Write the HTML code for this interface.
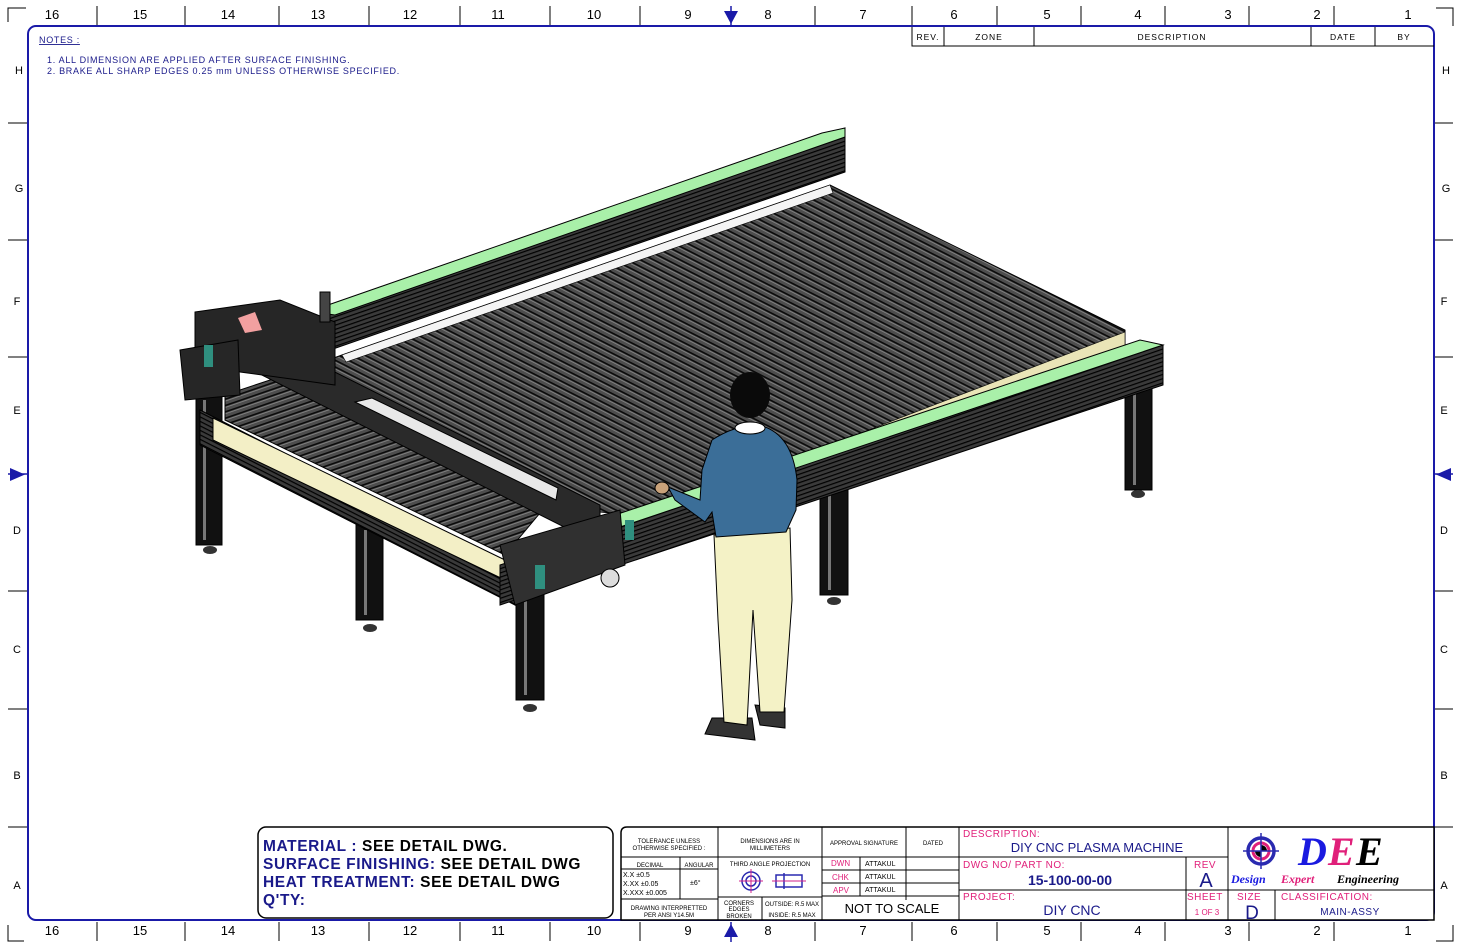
<!DOCTYPE html>
<html><head><meta charset="utf-8"><style>
html,body{margin:0;padding:0;background:#fff;}
svg{display:block;font-family:"Liberation Sans",sans-serif;}
</style></head><body>
<svg width="1461" height="949" viewBox="0 0 1461 949" xmlns="http://www.w3.org/2000/svg">
<defs>
<pattern id="sl" width="6" height="6" patternUnits="userSpaceOnUse" patternTransform="rotate(27)">
<rect width="6" height="6" fill="#4d4d4d"/><rect y="0" width="6" height="1.6" fill="#0a0a0a"/><rect y="2.2" width="6" height="0.8" fill="#8a8a8a"/>
</pattern>
<pattern id="sl2" width="6" height="6" patternUnits="userSpaceOnUse" patternTransform="rotate(-19)">
<rect width="6" height="6" fill="#4d4d4d"/><rect y="0" width="6" height="1.6" fill="#0a0a0a"/><rect y="2.2" width="6" height="0.8" fill="#8a8a8a"/>
</pattern>
<pattern id="rl" width="4" height="4" patternUnits="userSpaceOnUse" patternTransform="rotate(-19)">
<rect width="4" height="4" fill="#3a3a3a"/><rect width="4" height="1.2" fill="#000"/>
</pattern>
<pattern id="rl2" width="4" height="4" patternUnits="userSpaceOnUse" patternTransform="rotate(27)">
<rect width="4" height="4" fill="#3a3a3a"/><rect width="4" height="1.2" fill="#000"/>
</pattern>
</defs>
<rect width="1461" height="949" fill="#fff"/>
<path d="M8,22 V8 H26 M1436,8 H1453 V26 M8,925 V941 H24 M1453,925 V941 H1436" stroke="#000" fill="none" stroke-width="1"/>
<g stroke="#000" stroke-width="1">
<path d="M97,6V26M185,6V26M279,6V26M369,6V26M460,6V26M550,6V26M640,6V26M815,6V26M912,6V26M997,6V26M1081,6V26M1165,6V26M1249,6V26M1334,6V26"/>
<path d="M97,922V941M185,922V941M279,922V941M369,922V941M460,922V941M550,922V941M640,922V941M815,922V941M912,922V941M997,922V941M1081,922V941M1165,922V941M1249,922V941M1334,922V941"/>
<path d="M8,123H28M8,240H28M8,357H28M8,591H28M8,709H28M8,827H28M1434,123H1453M1434,240H1453M1434,357H1453M1434,591H1453M1434,709H1453M1434,827H1453"/>
</g>
<g font-size="13" fill="#000" text-anchor="middle">
<text x="52" y="19">16</text><text x="140" y="19">15</text><text x="228" y="19">14</text><text x="318" y="19">13</text><text x="410" y="19">12</text><text x="498" y="19">11</text><text x="594" y="19">10</text><text x="688" y="19">9</text><text x="768" y="19">8</text><text x="863" y="19">7</text><text x="954" y="19">6</text><text x="1047" y="19">5</text><text x="1138" y="19">4</text><text x="1228" y="19">3</text><text x="1317" y="19">2</text><text x="1408" y="19">1</text>
<text x="52" y="935">16</text><text x="140" y="935">15</text><text x="228" y="935">14</text><text x="318" y="935">13</text><text x="410" y="935">12</text><text x="498" y="935">11</text><text x="594" y="935">10</text><text x="688" y="935">9</text><text x="768" y="935">8</text><text x="863" y="935">7</text><text x="954" y="935">6</text><text x="1047" y="935">5</text><text x="1138" y="935">4</text><text x="1228" y="935">3</text><text x="1317" y="935">2</text><text x="1408" y="935">1</text>
</g>
<g font-size="11" fill="#000" text-anchor="middle">
<text x="19" y="74">H</text><text x="19" y="192">G</text><text x="17" y="305">F</text><text x="17" y="414">E</text><text x="17" y="534">D</text><text x="17" y="653">C</text><text x="17" y="779">B</text><text x="17" y="889">A</text>
<text x="1446" y="74">H</text><text x="1446" y="192">G</text><text x="1444" y="305">F</text><text x="1444" y="414">E</text><text x="1444" y="534">D</text><text x="1444" y="653">C</text><text x="1444" y="779">B</text><text x="1444" y="889">A</text>
</g>
<g fill="#1a1aa8">
<path d="M724,11H738L731,24Z"/><path d="M724,937H738L731,924Z"/>
<path d="M10,468V481L25,474.5Z"/><path d="M1451,468V481L1436,474.5Z"/>
</g>
<path d="M731,6V26M731,922V942M8,474H28M1434,474H1453" stroke="#1a1aa8" stroke-width="1.5"/>
<rect x="28" y="26" width="1406" height="894" rx="8" fill="none" stroke="#1a1aa8" stroke-width="2"/>
<g font-size="9" fill="#1a1a8a" letter-spacing="0.7">
<text x="39" y="43" text-decoration="underline">NOTES :</text>
<text x="47" y="63">1.  ALL DIMENSION ARE APPLIED AFTER SURFACE FINISHING.</text>
<text x="47" y="74">2.  BRAKE ALL SHARP EDGES  0.25 mm UNLESS OTHERWISE SPECIFIED.</text>
</g>
<g stroke="#000" stroke-width="1" fill="none">
<path d="M912,27V46H1434M944,27V46M1034,27V46M1311,27V46M1375,27V46"/>
</g>
<g font-size="8.5" fill="#000" text-anchor="middle" letter-spacing="1">
<text x="928" y="40">REV.</text><text x="989" y="40">ZONE</text><text x="1172" y="40">DESCRIPTION</text><text x="1343" y="40">DATE</text><text x="1404" y="40">BY</text>
</g>

<!-- ===== MACHINE ===== -->
<g fill="#111" stroke="#000">
<rect x="196" y="395" width="26" height="150"/><rect x="356" y="525" width="27" height="95"/>
<rect x="516" y="590" width="28" height="110"/><rect x="820" y="490" width="28" height="105"/>
<rect x="1125" y="385" width="27" height="105"/>
</g>
<g fill="#777"><rect x="203" y="400" width="3" height="140"/><rect x="364" y="530" width="3" height="85"/><rect x="524" y="595" width="3" height="100"/><rect x="828" y="495" width="3" height="95"/><rect x="1133" y="390" width="3" height="95"/></g>
<g fill="#333"><ellipse cx="210" cy="550" rx="7" ry="4"/><ellipse cx="370" cy="628" rx="7" ry="4"/><ellipse cx="530" cy="708" rx="7" ry="4"/><ellipse cx="834" cy="601" rx="7" ry="4"/><ellipse cx="1138" cy="494" rx="7" ry="4"/></g>
<!-- back rail -->
<polygon points="330,305 845,128 845,172 330,350" fill="url(#rl)" stroke="#000"/>
<polygon points="328,305 822,133 845,128 845,137 335,315 328,314" fill="#a9f0a9" stroke="#000"/>
<!-- left frame beam -->
<polygon points="200,410 515,570 515,605 200,445" fill="url(#rl2)" stroke="#000"/>
<polygon points="213,418 505,560 505,580 213,440" fill="#f3efc6" stroke="#000"/>
<!-- slat bed -->
<polygon points="342,355 830,185 1125,330 1125,345 640,515 600,512 230,400 240,392" fill="url(#sl)" stroke="#000"/>
<polygon points="342,355 830,185 833,193 346,362" fill="#f4f4f4" stroke="#000" stroke-width="0.6"/>
<polygon points="225,395 300,370 555,495 505,555 225,420" fill="url(#sl2)" stroke="#000"/>
<polygon points="790,460 1125,332 1125,347 792,475" fill="#e9e4b7" stroke="#000" stroke-width="0.6"/>
<!-- front rail -->
<polygon points="500,565 1163,345 1163,385 500,605" fill="url(#rl)" stroke="#000"/>
<polygon points="600,520 1140,340 1163,345 620,527" fill="#a9f0a9" stroke="#000"/>
<!-- gantry -->
<polygon points="232,340 255,332 600,505 600,528 580,535 232,360" fill="#2a2a2a" stroke="#000"/>
<polygon points="355,402 372,398 558,488 556,500" fill="#e8e8e8" stroke="#000"/>
<polygon points="195,312 280,300 335,322 335,385 240,372 195,355" fill="#262626" stroke="#000"/>
<polygon points="238,318 255,312 262,330 245,333" fill="#f2a0a0"/>
<rect x="320" y="292" width="10" height="30" fill="#444" stroke="#000"/>
<polygon points="180,350 238,340 240,395 185,400" fill="#262626" stroke="#000"/>
<rect x="204" y="345" width="9" height="22" fill="#2f8f7f"/>
<polygon points="500,545 620,510 625,565 515,605" fill="#303030" stroke="#000"/>
<rect x="535" y="565" width="10" height="24" fill="#2f8f7f"/><rect x="625" y="520" width="9" height="20" fill="#2f8f7f"/>
<circle cx="610" cy="578" r="9" fill="#ddd" stroke="#000"/>
<!-- person -->
<polygon points="712,718 752,718 755,740 705,734" fill="#333" stroke="#000"/>
<polygon points="755,705 785,708 785,728 760,725" fill="#333" stroke="#000"/>
<path d="M714,535 L790,528 L792,600 L784,712 L760,712 L753,610 L747,725 L724,722 L718,620 Z" fill="#f4f2c6" stroke="#000"/>
<path d="M712,440 Q735,425 758,425 Q792,432 797,480 L796,510 L786,532 L716,537 L712,512 L705,522 L675,500 L668,487 L700,500 L702,470 Z" fill="#3b6e98" stroke="#000"/>
<ellipse cx="750" cy="428" rx="15" ry="6" fill="#fff" stroke="#000"/>
<ellipse cx="750" cy="395" rx="20" ry="23" fill="#0a0a0a"/>
<ellipse cx="662" cy="488" rx="7" ry="6" fill="#c9a27a" stroke="#000"/>

<!-- ===== TITLE BLOCK ===== -->
<rect x="258" y="827" width="355" height="91" rx="8" fill="#fff" stroke="#000" stroke-width="1.5"/>
<g font-size="15.5" font-weight="bold" letter-spacing="0.6">
<text x="263" y="851"><tspan fill="#1a1a8a">MATERIAL : </tspan><tspan fill="#000">SEE DETAIL DWG.</tspan></text>
<text x="263" y="869"><tspan fill="#1a1a8a">SURFACE FINISHING: </tspan><tspan fill="#000">SEE DETAIL DWG</tspan></text>
<text x="263" y="887"><tspan fill="#1a1a8a">HEAT TREATMENT: </tspan><tspan fill="#000">SEE DETAIL DWG</tspan></text>
<text x="263" y="905" fill="#1a1a8a">Q'TY:</text>
</g>
<path d="M627,827 H1434 V920 H621 V833 Q621,827 627,827 Z" fill="#fff" stroke="#000" stroke-width="1.5"/>
<g stroke="#000" stroke-width="1" fill="none">
<path d="M718,827V920M822,827V920M906,827V900M959,827V920M1228,827V920"/>
<path d="M621,857H959M621,869H718M680,857V899M621,899H718M718,897H822M762,897V920"/>
<path d="M822,870H959M822,883H959M822,896H959M860,857V896"/>
<path d="M959,857H1228M959,890H1434M1186,857V920M1275,890V920"/>
</g>
<g font-size="6" fill="#000" text-anchor="middle">
<text x="669" y="843">TOLERANCE UNLESS</text><text x="669" y="850">OTHERWISE SPECIFIED :</text>
<text x="650" y="867">DECIMAL</text><text x="699" y="867">ANGULAR</text>
<text x="770" y="843">DIMENSIONS ARE IN</text><text x="770" y="850">MILLIMETERS</text>
<text x="770" y="866">THIRD ANGLE PROJECTION</text>
<text x="864" y="845">APPROVAL SIGNATURE</text><text x="933" y="845">DATED</text>
<text x="669" y="910">DRAWING INTERPRETTED</text><text x="669" y="917">PER ANSI Y14.5M</text>
<text x="739" y="905">CORNERS</text><text x="739" y="911">EDGES</text><text x="739" y="918">BROKEN</text>
<text x="792" y="906">OUTSIDE: R.5 MAX</text><text x="792" y="917">INSIDE: R.5 MAX</text>
</g>
<g font-size="7" fill="#000">
<text x="623" y="877">X.X    ±0.5</text><text x="623" y="886">X.XX   ±0.05</text><text x="623" y="895">X.XXX ±0.005</text>
<text x="690" y="885">±6°</text>
<text x="865" y="866">ATTAKUL</text><text x="865" y="879">ATTAKUL</text><text x="865" y="892">ATTAKUL</text>
</g>
<g font-size="8" fill="#e0207a"><text x="831" y="866">DWN</text><text x="832" y="880">CHK</text><text x="833" y="893">APV</text></g>
<g stroke="#2a2ab0" stroke-width="1.5" fill="none"><circle cx="751" cy="881" r="9"/><circle cx="751" cy="881" r="5"/><path d="M776,875 H802 L802,887 H776 Z M784,873 V889"/></g>
<path d="M739,881H763M751,869V893M772,881H806" stroke="#d0208a" stroke-width="1"/>
<text x="892" y="913" font-size="13" text-anchor="middle" fill="#000">NOT TO SCALE</text>
<g font-size="10" fill="#e0207a" letter-spacing="0.5">
<text x="963" y="837">DESCRIPTION:</text><text x="963" y="868">DWG NO/ PART NO:</text><text x="963" y="900">PROJECT:</text>
<text x="1194" y="868">REV</text><text x="1187" y="900">SHEET</text><text x="1237" y="900">SIZE</text><text x="1281" y="900">CLASSIFICATION:</text>
</g>
<g fill="#1a1a8a" text-anchor="middle">
<text x="1097" y="852" font-size="13">DIY CNC  PLASMA MACHINE</text>
<text x="1070" y="885" font-size="14" font-weight="bold">15-100-00-00</text>
<text x="1072" y="915" font-size="14">DIY CNC</text>
<text x="1206" y="887" font-size="20">A</text>
<text x="1252" y="919" font-size="19">D</text>
<text x="1207" y="915" font-size="8" fill="#e0207a">1 OF 3</text>
<text x="1350" y="915" font-size="10" letter-spacing="0.5">MAIN-ASSY</text>
</g>
<circle cx="1261" cy="851" r="13" fill="none" stroke="#2a2ab0" stroke-width="3.5"/>
<circle cx="1261" cy="851" r="8" fill="#fff" stroke="#e0207a" stroke-width="3"/>
<path d="M1261,851 L1261,845 A6,6 0 0 1 1267,851 Z M1261,851 L1261,857 A6,6 0 0 1 1255,851 Z" fill="#000"/>
<path d="M1243,851H1279M1261,833V869" stroke="#2a2ab0" stroke-width="1.5"/>
<g font-family="'Liberation Serif',serif" font-weight="bold" font-style="italic" font-size="40">
<text x="1298" y="865" fill="#1a1ae0">D</text><text x="1328" y="865" fill="#e0207a">E</text><text x="1356" y="865" fill="#000">E</text>
</g>
<g font-family="'Liberation Serif',serif" font-weight="bold" font-style="italic" font-size="12">
<text x="1231" y="883" fill="#1a1ae0">Design</text><text x="1281" y="883" fill="#e0207a">Expert</text><text x="1337" y="883" fill="#000">Engineering</text>
</g>
</svg>
</body></html>
